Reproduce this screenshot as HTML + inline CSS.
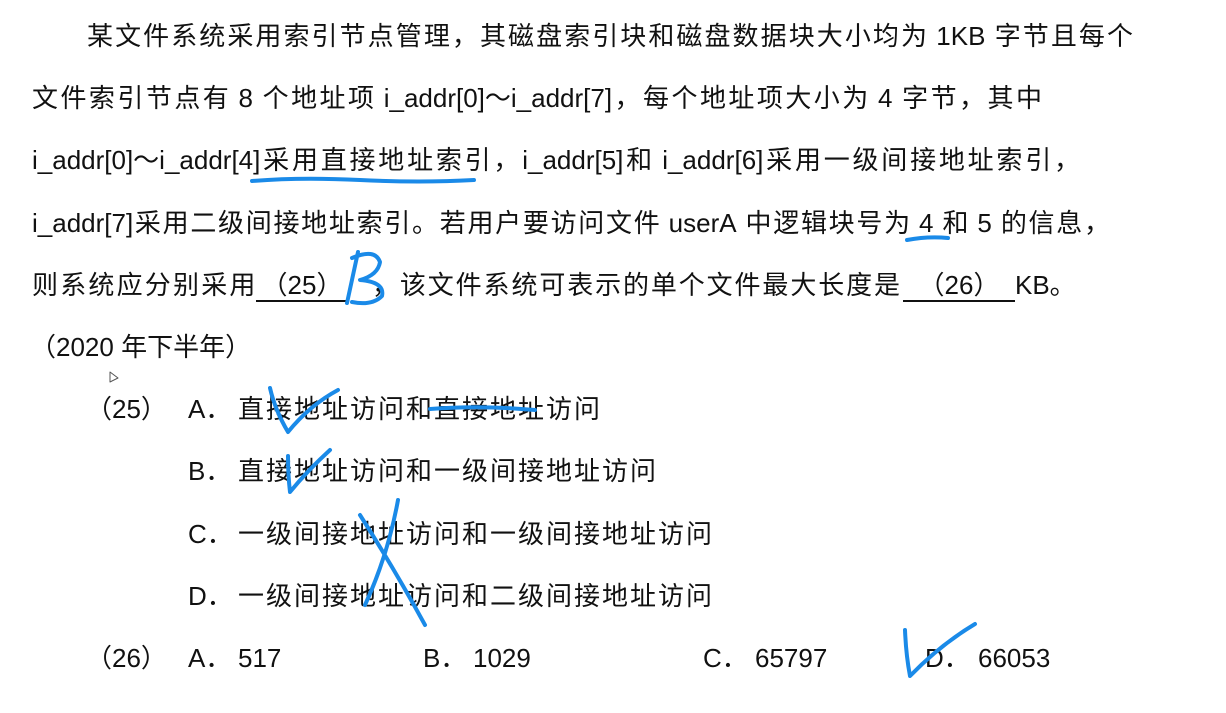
<!DOCTYPE html>
<html><head><meta charset="utf-8"><style>
body{margin:0;width:1226px;height:713px;background:#fff;position:relative;overflow:hidden;
font-family:"Liberation Sans","Noto Sans CJK SC",sans-serif;font-size:26px;color:#111;}
.l{position:absolute;height:36px;line-height:36px;white-space:nowrap;text-align:justify;text-align-last:justify;}
.p{position:absolute;height:36px;line-height:36px;white-space:nowrap;}
.o{letter-spacing:2px}
b{font-weight:normal;display:inline-block;font-size:26px;letter-spacing:0}
u{text-decoration:none;border-bottom:2px solid #111;display:inline-block;line-height:30px;}
</style></head><body>
<div class="l" style="left:87px;top:18px;width:1046px">某文件系统采用索引节点管理，其磁盘索引块和磁盘数据块大小均为<b>&nbsp;1KB&nbsp;</b>字节且每个</div>
<div class="l" style="left:32px;top:80px;width:1010px">文件索引节点有<b>&nbsp;8&nbsp;</b>个地址项<b>&nbsp;i_addr[0]～i_addr[7]</b>，每个地址项大小为<b>&nbsp;4&nbsp;</b>字节，其中</div>
<div class="l" style="left:32px;top:142px;width:1048px"><b>i_addr[0]～i_addr[4]</b>采用直接地址索引，<b>i_addr[5]</b>和<b>&nbsp;i_addr[6]</b>采用一级间接地址索引，</div>
<div class="l" style="left:32px;top:205px;width:1078px"><b>i_addr[7]</b>采用二级间接地址索引。若用户要访问文件<b>&nbsp;userA&nbsp;</b>中逻辑块号为<b>&nbsp;4&nbsp;</b>和<b>&nbsp;5&nbsp;</b>的信息，</div>
<div class="p" style="left:32px;top:267px;letter-spacing:2.2px">则系统应分别采用</div>
<div class="p" style="left:256px;top:267px"><u style="width:92px;text-align:center">（25）</u></div>
<div class="l" style="left:372px;top:267px;width:528px">，该文件系统可表示的单个文件最大长度是</div>
<div class="p" style="left:903px;top:267px"><u style="width:112px;text-align:center">（26）</u>KB。</div>
<div class="p" style="left:30px;top:329px">（2020 年下半年）</div>
<div class="p" style="left:86px;top:391px">（25）</div>
<div class="p" style="left:188px;top:391px">A．</div><div class="p o" style="left:238px;top:391px">直接地址访问和直接地址访问</div>
<div class="p" style="left:188px;top:453px">B．</div><div class="p o" style="left:238px;top:453px">直接地址访问和一级间接地址访问</div>
<div class="p" style="left:188px;top:516px">C．</div><div class="p o" style="left:238px;top:516px">一级间接地址访问和一级间接地址访问</div>
<div class="p" style="left:188px;top:578px">D．</div><div class="p o" style="left:238px;top:578px">一级间接地址访问和二级间接地址访问</div>
<div class="p" style="left:86px;top:640px">（26）</div>
<div class="p" style="left:188px;top:640px">A．</div><div class="p" style="left:238px;top:640px">517</div>
<div class="p" style="left:423px;top:640px">B．</div><div class="p" style="left:473px;top:640px">1029</div>
<div class="p" style="left:703px;top:640px">C．</div><div class="p" style="left:755px;top:640px">65797</div>
<div class="p" style="left:925px;top:640px">D．</div><div class="p" style="left:978px;top:640px">66053</div>
<svg width="1226" height="713" style="position:absolute;left:0;top:0" fill="none" stroke="#1a8ae8" stroke-width="4" stroke-linecap="round" stroke-linejoin="round">
<path d="M252 181 Q300 177 360 180 Q420 183 474 180"/>
<path d="M907 240 Q928 236 948 238"/>
<path d="M358 252 Q352 280 347 303 M352 258 Q375 248 380 262 Q378 275 360 280 Q385 282 382 296 Q372 306 352 302"/>
<path d="M270 388 Q275 410 288 432 Q310 405 338 390"/>
<path d="M430 409 Q480 405 535 410"/>
<path d="M288 456 Q288 475 290 492 Q308 470 330 450"/>
<path d="M360 515 Q395 570 425 625 M398 500 Q388 555 365 605"/>
<path d="M905 630 Q906 655 910 676 Q940 645 975 624"/>
<path d="M110 372 L110 382 L118 378 Z" stroke="#555" stroke-width="1"/>
</svg>
</body></html>
